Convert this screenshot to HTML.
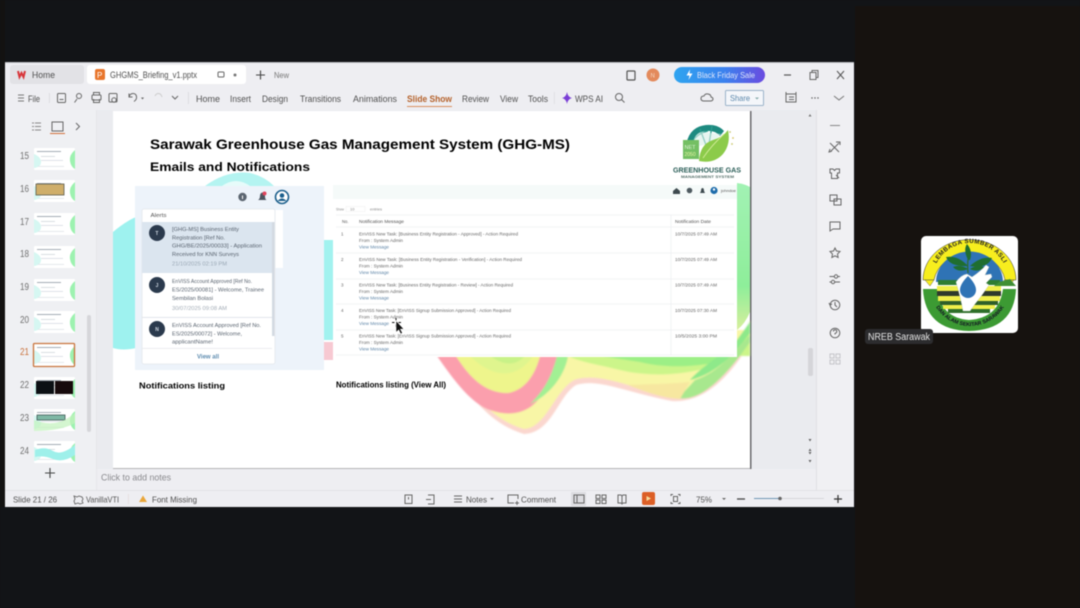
<!DOCTYPE html>
<html lang="en"><head><meta charset="utf-8"><title>GHGMS Briefing</title>
<style>
html,body{margin:0;padding:0;background:#121417;width:1080px;height:608px;overflow:hidden}
svg{display:block;filter:blur(.42px)}
text{font-family:"Liberation Sans",sans-serif;fill:#444}
.m{font-size:9px;fill:#505050}
.n{font-size:10px;fill:#707070}
.b{font-weight:bold;fill:#000}
.a{font-size:5.6px;fill:#5a6470}
.t{font-size:4.5px;fill:#666}
.l{font-size:4.5px;fill:#5f86a8}
.i{fill:none;stroke:#666;stroke-width:1}
</style></head><body>
<svg width="1080" height="608" viewBox="0 0 1080 608" xmlns="http://www.w3.org/2000/svg">
<rect width="1080" height="608" fill="#121417"/>
<rect x="855" y="6" width="225" height="602" fill="#16120f"/>
<rect x="0" y="0" width="5" height="608" fill="#14110e" opacity=".6"/>
<rect x="0" y="507" width="854" height="101" fill="#121417"/>

<!-- window -->
<rect x="5" y="62" width="849" height="445" fill="#eeeef2"/>
<rect x="5" y="62" width="849" height="1" fill="#bcbcc0"/>
<rect x="5" y="110" width="91" height="381" fill="#eff0f3"/>
<rect x="96" y="110" width="1" height="381" fill="#e6e6ea"/>
<rect x="97" y="110" width="720" height="359" fill="#eaebef"/>
<rect x="817" y="110" width="37" height="381" fill="#f0f0f3"/>
<rect x="816" y="110" width="1" height="381" fill="#e0e0e4"/>
<rect x="5" y="490" width="849" height="1" fill="#e2e2e6"/>

<!-- tabs -->
<rect x="10" y="65" width="74" height="19" rx="3" fill="#e2e2e6"/>
<path d="M18 71l1.500 6 2-4 2 4 1.500-6" fill="none" stroke="#d8363a" stroke-width="2"/>
<text x="32" y="78" class="m" textLength="23" lengthAdjust="spacingAndGlyphs">Home</text>
<rect x="87" y="65" width="159" height="19" rx="3" fill="#fff"/>
<rect x="95" y="69" width="10" height="11" rx="2" fill="#e8762c"/>
<text x="97" y="78" style="font-size:8px;fill:#fff">P</text>
<text x="110" y="78" class="m" textLength="87" lengthAdjust="spacingAndGlyphs">GHGMS_Briefing_v1.pptx</text>
<rect x="218" y="72" width="6" height="5" rx="1" class="i"/>
<circle cx="235" cy="75" r="1.500" fill="#777"/>
<path d="M256 75h9M260.500 70.500v9" stroke="#444" stroke-width="1.100"/>
<text x="274" y="78" class="m" style="font-size:8px;fill:#777" textLength="15" lengthAdjust="spacingAndGlyphs">New</text>
<rect x="627" y="71" width="8" height="9" rx="1" fill="none" stroke="#555" stroke-width="1.200"/>
<circle cx="653" cy="75" r="6.500" fill="#e38a5c"/>
<text x="650.500" y="77.500" style="font-size:6px;fill:#f5d6c2">N</text>
<defs>
<linearGradient id="sale" x1="0" x2="1" y1="0" y2="0"><stop offset="0" stop-color="#2fa4f0"/><stop offset=".55" stop-color="#3b82ee"/><stop offset="1" stop-color="#6a4be0"/></linearGradient>
<linearGradient id="gr" x1="0" x2="0" y1="0" y2="1"><stop offset="0" stop-color="#a2f2b4"/><stop offset=".7" stop-color="#8eee9a"/><stop offset="1" stop-color="#d7ef9c"/></linearGradient>
<filter id="soft" x="-5%" y="-5%" width="110%" height="110%"><feGaussianBlur stdDeviation=".9"/></filter>
<path id="arcTop" d="M11 45A38 38 0 0 1 87 45"/>
<path id="arcBot" d="M9 50A40 40 0 0 0 89 50"/>
<g id="thumb"><rect width="41" height="22" rx="1" fill="#fff"/><rect x="3" y="3" width="24" height="1" fill="#a5adb5"/><path d="M0 6q7 3 7 8t-7 6z" fill="#d6f7f2"/><path d="M41 2q-6 5-5 11t5 8z" fill="#9df2b0"/><rect x="7" y="8" width="14" height=".8" fill="#d0d6dc"/><rect x="7" y="12" width="22" height=".8" fill="#d8dde2"/><rect x="4" y="18" width="26" height=".8" fill="#dfe3e8"/></g>
</defs>
<rect x="674" y="67" width="91" height="16" rx="8" fill="url(#sale)"/>
<path d="M690 69.500l-3.500 6h3l-1 4.500 4-6.500h-3z" fill="#fff"/>
<text x="697" y="78" style="font-size:8.500px;fill:#dfe6fb" textLength="58" lengthAdjust="spacingAndGlyphs">Black Friday Sale</text>
<path d="M784 75h7" stroke="#555" stroke-width="1.200"/>
<path d="M810 72.500h6v7h-6zM812 72.500v-2h6v7h-2" class="i"/>
<path d="M837 71l7 8M844 71l-7 8" stroke="#555" stroke-width="1"/>

<!-- ribbon -->
<path d="M18 95h6M18 98h6M18 101h6" stroke="#777" stroke-width=".9"/>
<text x="28" y="102" class="m" textLength="12" lengthAdjust="spacingAndGlyphs">File</text>
<rect x="49" y="93" width=".8" height="10" fill="#d8d8dc"/>
<rect x="57.500" y="93.500" width="8" height="9" rx="1" class="i"/><path d="M59.500 99.500h4" class="i"/>
<circle cx="79" cy="96" r="2.500" class="i"/><path d="M77 99l-2.500 3.500" class="i"/>
<rect x="92" y="95" width="9" height="5" rx="1" class="i"/><path d="M93.500 95v-2.500h6V95M93.500 99v3.500h6V99" class="i"/>
<rect x="109" y="93.500" width="8" height="8.500" rx="1" class="i"/><circle cx="114" cy="100" r="2.200" class="i"/>
<path d="M129 97q1-3.500 4-3.500t3.500 3-2.500 5M129 93.500V97h3.500" class="i"/>
<path d="M141 97.500h3l-1.500 2z" fill="#666"/>
<path d="M162 97q-1-3.500-3.500-3.500T155 96" stroke="#ccc" fill="none"/>
<path d="M172 96l3 3 3-3" class="i"/>
<rect x="188" y="92" width=".8" height="12" fill="#d8d8dc"/>
<text x="196" y="102" class="m" textLength="24" lengthAdjust="spacingAndGlyphs">Home</text>
<text x="230" y="102" class="m" textLength="21" lengthAdjust="spacingAndGlyphs">Insert</text>
<text x="262" y="102" class="m" textLength="26" lengthAdjust="spacingAndGlyphs">Design</text>
<text x="300" y="102" class="m" textLength="41" lengthAdjust="spacingAndGlyphs">Transitions</text>
<text x="353" y="102" class="m" textLength="44" lengthAdjust="spacingAndGlyphs">Animations</text>
<text x="407" y="102" class="m" style="font-weight:bold;fill:#b5622c" textLength="45" lengthAdjust="spacingAndGlyphs">Slide Show</text>
<rect x="407" y="106" width="45" height="1" fill="#d9905e"/>
<text x="462" y="102" class="m" textLength="27" lengthAdjust="spacingAndGlyphs">Review</text>
<text x="500" y="102" class="m" textLength="18" lengthAdjust="spacingAndGlyphs">View</text>
<text x="528" y="102" class="m" textLength="20" lengthAdjust="spacingAndGlyphs">Tools</text>
<rect x="554" y="92" width=".8" height="12" fill="#dcdce0"/>
<path d="M567 92q.8 5 5 6q-4.200 1-5 6q-.8-5-5-6q4.200-1 5-6z" fill="#7a3ed6"/>
<text x="575" y="102" class="m" textLength="28" lengthAdjust="spacingAndGlyphs">WPS AI</text>
<circle cx="619" cy="97" r="3.500" class="i"/><path d="M621.500 99.500l3 3" class="i"/>
<path d="M704 101q-3 0-3-2.500t3-2.500q1-2.500 4-2t3 3q2 .5 2 2t-2 2z" class="i"/>
<rect x="725.500" y="90.500" width="38" height="15" rx="1" fill="#f4f6fa" stroke="#9bb3c9"/>
<text x="730" y="101" style="font-size:8.500px;fill:#5b87ab" textLength="20" lengthAdjust="spacingAndGlyphs">Share</text>
<path d="M755 97.500h4l-2 2z" fill="#8aa"/>
<path d="M786 94h10v8h-10zM786 94v-2M796 94v-2M789 97h5M789 99.500h5" class="i"/>
<circle cx="812" cy="98" r=".7" fill="#555"/><circle cx="815" cy="98" r=".7" fill="#555"/><circle cx="818" cy="98" r=".7" fill="#555"/>
<path d="M834 96l5 4 5-4" stroke="#777" fill="none"/>

<!-- left panel -->
<path d="M32 123h9M32 126.500h9M32 130h9" stroke="#888" stroke-width=".9" stroke-dasharray="2 1 6"/>
<rect x="52" y="122" width="11" height="9" fill="none" stroke="#666"/>
<rect x="50" y="133" width="15" height="1" fill="#d2703a"/>
<path d="M76 123l3.500 3.500-3.500 3.500" class="i"/>

<text x="20" y="159" class="n" textLength="9" lengthAdjust="spacingAndGlyphs">15</text><use href="#thumb" x="34" y="148"/>
<text x="20" y="192" class="n" textLength="9" lengthAdjust="spacingAndGlyphs">16</text><use href="#thumb" x="34" y="180"/><rect x="36" y="184" width="28" height="11" fill="#cfae6a" stroke="#5b5b4c" stroke-width=".8"/>
<text x="20" y="225" class="n" textLength="9" lengthAdjust="spacingAndGlyphs">17</text><use href="#thumb" x="34" y="213"/>
<text x="20" y="257" class="n" textLength="9" lengthAdjust="spacingAndGlyphs">18</text><use href="#thumb" x="34" y="246"/>
<text x="20" y="290" class="n" textLength="9" lengthAdjust="spacingAndGlyphs">19</text><use href="#thumb" x="34" y="279"/>
<text x="20" y="323" class="n" textLength="9" lengthAdjust="spacingAndGlyphs">20</text><use href="#thumb" x="34" y="311"/>
<text x="20" y="355" class="n" style="fill:#c9703a" textLength="9" lengthAdjust="spacingAndGlyphs">21</text><use href="#thumb" x="34" y="344"/>
<rect x="33.500" y="343.500" width="41" height="23" rx="1" fill="none" stroke="#c9753d" stroke-width="1.300"/>
<text x="20" y="388" class="n" textLength="9" lengthAdjust="spacingAndGlyphs">22</text><use href="#thumb" x="34" y="377"/><rect x="36" y="381" width="18" height="13" fill="#0c1014"/><rect x="55" y="381" width="18" height="13" fill="#170a0c"/>
<text x="20" y="421" class="n" textLength="9" lengthAdjust="spacingAndGlyphs">23</text><use href="#thumb" x="34" y="409"/><rect x="37" y="415" width="28" height="5" fill="#7fb8a4" stroke="#3d5a55" stroke-width=".8"/><path d="M34 420q10 4 20 3t21-10v10q-14 8-41 8z" fill="#c2f2bc" opacity=".7"/>
<text x="20" y="454" class="n" textLength="9" lengthAdjust="spacingAndGlyphs">24</text><use href="#thumb" x="34" y="441"/><path d="M35 450q10-4 18 1t22-6v10q-12 8-22 4t-18-2z" fill="#9ef0ea"/>
<rect x="87" y="315" width="4" height="117" rx="2" fill="#d6d6da"/>
<path d="M45 473h10M50 468v10" stroke="#444" stroke-width="1.100"/>

<!-- slide -->
<rect x="113" y="111" width="638.500" height="358" fill="#b5b5b8"/>
<rect x="750" y="111" width="1.500" height="358" fill="#6a6a6d"/>
<rect x="113" y="111" width="637" height="357" fill="#fff"/>

<!-- slide bg -->
<path d="M113 232C120 226 127 221 136 217L136 348C127 350 120 350 113 348Z" style="fill:#9ef2ef"/>
<path d="M205 186q22-16 45-13 14 3 24 13z" fill="#b4f4f1"/>
<path d="M222 186q14-10 28 0z" fill="#e6fbfa"/>
<path d="M324 240h9v100h-9z" fill="#a2f2ef"/>
<path d="M324 342h9v18h-9z" fill="#f7c9d2"/>
<path d="M737 183q8 1 13 4v125q-5 12-13 18z" fill="url(#gr)"/>

<!-- rainbow -->
<g filter="url(#soft)">
<path d="M436 350C462 378 478 420 524 434C552 433 558 396 576 385C598 378 625 392 672 401C702 403 728 380 750 343V330H600z" fill="#fbd7cf"/>
<path d="M438 350C464 376 482 417 524 429C546 428 554 392 574 380C598 372 628 386 672 398C700 400 725 378 750 340V330H600z" fill="#f8f6a6"/>
<path d="M437 356C455 382 472 404 490 410C512 418 532 412 542 394C550 380 554 368 558 356H540C535 375 525 390 508 393C485 393 470 378 456 356z" fill="#fb9fad"/>
<path d="M456 356C470 378 485 393 508 393C525 390 535 375 540 356z" fill="#eef58c"/>
<path d="M470 356C490 376 515 382 533 356z" fill="#dff58e"/>
<path d="M490 356C505 366 515 366 525 356z" fill="#c8f288"/>
<path d="M557 356H568C565 375 550 395 530 404C545 390 552 375 557 356z" fill="#a2f094"/>
<path d="M568 356H750V320L737 356C710 372 660 380 620 370C600 365 580 362 568 356z" fill="#ccf58a"/>
<path d="M600 356H737C715 366 670 370 640 362z" fill="#9cef86"/>
<path d="M678 398C700 402 725 378 750 342V335C735 350 720 372 695 380C688 388 682 394 678 398z" fill="#a8e88e"/>
<path d="M690 380C712 375 730 360 750 333V322L737 340C722 355 700 368 690 380z" fill="#8ee98a"/>
<path d="M628 385C650 394 665 398 680 399L690 382C670 384 650 384 628 385z" fill="#f7e7a0"/>
</g>

<!-- title -->
<text x="150" y="149" class="b" style="font-size:13.500px" textLength="420" lengthAdjust="spacingAndGlyphs">Sarawak Greenhouse Gas Management System (GHG-MS)</text>
<text x="150" y="171" class="b" style="font-size:12px" textLength="160" lengthAdjust="spacingAndGlyphs">Emails and Notifications</text>

<!-- GHG logo -->
<path d="M686 147q2-20 20-22q12-1 18 6l-4 5q-5-6-14-5q-12 1-14 16z" fill="#1d8a80"/>
<path d="M692 142q6-9 16-11M700 129l6 16M712 126l-3 18" stroke="#2d9d90" stroke-width="1.300" fill="none"/>
<path d="M694 147q-2-12 7-15l20 2-8 9z" fill="#d8efe8" opacity=".6"/>
<rect x="683" y="140" width="16" height="19" fill="#74bf63"/>
<text x="684.500" y="149" style="font-size:5.500px;fill:#dff3d8">NET</text>
<text x="684.500" y="156" style="font-size:5px;fill:#eef8a8">2050</text>
<path d="M699 161q1-17 14-21 10-3 15-10 3 14-5 24-9 10-24 7z" fill="#8ccb4a"/>
<path d="M703 158q8-12 21-24" stroke="#d3ec9a" stroke-width=".9" fill="none"/>
<circle cx="730" cy="132" r=".9" fill="#c9c76a"/><circle cx="733" cy="138" r=".9" fill="#d5c55f"/><circle cx="732" cy="144" r=".9" fill="#c9c76a"/>
<text x="673" y="172.500" style="font-size:7px;font-weight:bold;fill:#2b5e58" textLength="68" lengthAdjust="spacingAndGlyphs">GREENHOUSE GAS</text>
<text x="681" y="178" style="font-size:4px;font-weight:bold;fill:#55706a" textLength="53" lengthAdjust="spacingAndGlyphs">MANAGEMENT SYSTEM</text>

<!-- left alerts panel -->
<rect x="135" y="186" width="189" height="184" fill="#edf3fa"/>
<rect x="275" y="210" width="8" height="58" fill="#fff"/>
<circle cx="242.500" cy="197" r="4.200" fill="#5b6570"/><rect x="242" y="195.500" width="1" height="3.500" fill="#fff"/>
<path d="M258 200q2-1 2-4t2.500-3.500 2.500 3.500 2 4z" fill="#4c5560"/>
<circle cx="264.500" cy="193.500" r="2" fill="#e0445c"/>
<circle cx="282" cy="197" r="6.500" fill="#fff" stroke="#1c5f8c" stroke-width="1.600"/>
<circle cx="282" cy="195.500" r="2.300" fill="#1c5f8c"/><path d="M277.500 201q4.500-5 9 0" fill="#1c5f8c"/>
<rect x="142" y="209" width="133" height="155" rx="2" fill="#fff" stroke="#e3e7ec" stroke-width=".8"/>
<text x="150.500" y="217" style="font-size:5.800px;fill:#555" textLength="16" lengthAdjust="spacingAndGlyphs">Alerts</text>
<rect x="142" y="222" width="130" height="51" fill="#dbe5ef"/>
<circle cx="157" cy="233" r="8" fill="#2b3a4d"/><text x="155.400" y="235" style="font-size:5px;font-weight:bold;fill:#cfd8e2">T</text>
<text x="172" y="231" class="a" textLength="67" lengthAdjust="spacingAndGlyphs">[GHG-MS] Business Entity</text>
<text x="172" y="239.500" class="a" textLength="53" lengthAdjust="spacingAndGlyphs">Registration [Ref No.</text>
<text x="172" y="247.500" class="a" textLength="90" lengthAdjust="spacingAndGlyphs">GHG/BE/2025/00033] - Application</text>
<text x="172" y="256" class="a" textLength="67" lengthAdjust="spacingAndGlyphs">Received for KNN Surveys</text>
<text x="172" y="265.500" class="a" style="fill:#9aa8b5" textLength="55" lengthAdjust="spacingAndGlyphs">21/10/2025 02:19 PM</text>
<circle cx="157" cy="285" r="8" fill="#2b3a4d"/><text x="155.600" y="287" style="font-size:5px;font-weight:bold;fill:#cfd8e2">J</text>
<text x="172" y="283" class="a" textLength="80" lengthAdjust="spacingAndGlyphs">EnVISS Account Approved [Ref No.</text>
<text x="172" y="291.500" class="a" textLength="92" lengthAdjust="spacingAndGlyphs">ES/2025/00081] - Welcome, Trainee</text>
<text x="172" y="300" class="a" textLength="41" lengthAdjust="spacingAndGlyphs">Sembilan Bolasi</text>
<text x="172" y="310" class="a" style="fill:#a5aeb8" textLength="55" lengthAdjust="spacingAndGlyphs">30/07/2025 09:08 AM</text>
<rect x="142" y="317" width="130" height=".8" fill="#dde1e6"/>
<circle cx="157" cy="329" r="8" fill="#2b3a4d"/><text x="155.200" y="331" style="font-size:5px;font-weight:bold;fill:#cfd8e2">N</text>
<text x="172" y="327" class="a" textLength="89" lengthAdjust="spacingAndGlyphs">EnVISS Account Approved [Ref No.</text>
<text x="172" y="335.500" class="a" textLength="70" lengthAdjust="spacingAndGlyphs">ES/2025/00072] - Welcome,</text>
<text x="172" y="343.500" class="a" textLength="41" lengthAdjust="spacingAndGlyphs">applicantName!</text>
<rect x="142" y="348" width="130" height=".8" fill="#e6e9ed"/>
<text x="197" y="358.500" style="font-size:6.500px;font-weight:bold;fill:#5f8db0" textLength="22" lengthAdjust="spacingAndGlyphs">View all</text>
<rect x="272" y="222" width="2.500" height="114" fill="#d3dae2"/>
<text x="139" y="388.500" class="b" style="font-size:8.500px" textLength="86" lengthAdjust="spacingAndGlyphs">Notifications listing</text>

<!-- right table -->
<rect x="333" y="185" width="404" height="172" fill="#fff"/>
<rect x="333" y="185" width="404" height="14" fill="#f5faf9"/>
<path d="M673 191l3.500-3 3.500 3v3h-7z" fill="#3e4a4f"/>
<circle cx="689.500" cy="190.500" r="2.800" fill="#4e5a60"/>
<path d="M700 193l1-2q0-3 1.500-3t1.500 3l1 2z" fill="#3e4a4f"/>
<circle cx="714" cy="190.500" r="3.600" fill="#1e6cab"/><circle cx="714" cy="189.500" r="1.200" fill="#fff"/>
<text x="721" y="192" style="font-size:4px;fill:#555" textLength="15" lengthAdjust="spacingAndGlyphs">johndoe</text>
<text x="336" y="210.500" style="font-size:4px;fill:#888" textLength="8" lengthAdjust="spacingAndGlyphs">Show</text>
<rect x="346" y="206.500" width="19" height="5" fill="#fff" stroke="#eee" stroke-width=".5"/>
<text x="350" y="210.500" style="font-size:4px;fill:#888">10</text>
<text x="370" y="210.500" style="font-size:4px;fill:#888" textLength="12" lengthAdjust="spacingAndGlyphs">entries</text>
<path d="M336 215h398M336 227h398M336 253h398M336 279h398M336 304h398M336 330h398M336 355h398" stroke="#eef0f2" stroke-width=".7"/>
<path d="M671 215v140" stroke="#eceef0" stroke-width=".7"/>
<text x="342" y="223" style="font-size:4.800px;fill:#555" textLength="6.500" lengthAdjust="spacingAndGlyphs">No.</text>
<text x="359" y="223" style="font-size:4.800px;fill:#555" textLength="45" lengthAdjust="spacingAndGlyphs">Notification Message</text>
<text x="675" y="223" style="font-size:4.800px;fill:#555" textLength="36" lengthAdjust="spacingAndGlyphs">Notification Date</text>

<text x="341" y="235.500" class="t">1</text>
<text x="359" y="235.500" class="t" textLength="159" lengthAdjust="spacingAndGlyphs">EnVISS New Task: [Business Entity Registration - Approved] - Action Required</text>
<text x="359" y="242" class="t" textLength="44" lengthAdjust="spacingAndGlyphs">From : System Admin</text>
<text x="359" y="248.500" class="l" textLength="30" lengthAdjust="spacingAndGlyphs">View Message</text>
<text x="675" y="235.500" class="t" textLength="42" lengthAdjust="spacingAndGlyphs">10/7/2025 07:49 AM</text>

<text x="341" y="261" class="t">2</text>
<text x="359" y="261" class="t" textLength="163" lengthAdjust="spacingAndGlyphs">EnVISS New Task: [Business Entity Registration - Verification] - Action Required</text>
<text x="359" y="267.500" class="t" textLength="44" lengthAdjust="spacingAndGlyphs">From : System Admin</text>
<text x="359" y="274" class="l" textLength="30" lengthAdjust="spacingAndGlyphs">View Message</text>
<text x="675" y="261" class="t" textLength="42" lengthAdjust="spacingAndGlyphs">10/7/2025 07:49 AM</text>

<text x="341" y="286.500" class="t">3</text>
<text x="359" y="286.500" class="t" textLength="154" lengthAdjust="spacingAndGlyphs">EnVISS New Task: [Business Entity Registration - Review] - Action Required</text>
<text x="359" y="293" class="t" textLength="44" lengthAdjust="spacingAndGlyphs">From : System Admin</text>
<text x="359" y="299.500" class="l" textLength="30" lengthAdjust="spacingAndGlyphs">View Message</text>
<text x="675" y="286.500" class="t" textLength="42" lengthAdjust="spacingAndGlyphs">10/7/2025 07:49 AM</text>

<text x="341" y="312" class="t">4</text>
<text x="359" y="312" class="t" textLength="152" lengthAdjust="spacingAndGlyphs">EnVISS New Task: [EnVISS Signup Submission Approved] - Action Required</text>
<text x="359" y="318.500" class="t" textLength="44" lengthAdjust="spacingAndGlyphs">From : System Admin</text>
<text x="359" y="325" class="l" textLength="30" lengthAdjust="spacingAndGlyphs">View Message</text>
<text x="675" y="312" class="t" textLength="42" lengthAdjust="spacingAndGlyphs">10/7/2025 07:30 AM</text>

<text x="341" y="337.500" class="t">5</text>
<text x="359" y="337.500" class="t" textLength="152" lengthAdjust="spacingAndGlyphs">EnVISS New Task: [EnVISS Signup Submission Approved] - Action Required</text>
<text x="359" y="344" class="t" textLength="44" lengthAdjust="spacingAndGlyphs">From : System Admin</text>
<text x="359" y="350.500" class="l" textLength="30" lengthAdjust="spacingAndGlyphs">View Message</text>
<text x="675" y="337.500" class="t" textLength="42" lengthAdjust="spacingAndGlyphs">10/5/2025 3:00 PM</text>

<!-- cursor -->
<path d="M396 318v9M392 322.500h9" stroke="#111" stroke-width="1" stroke-dasharray="2.500 4"/>
<path d="M396 320.500v12l2.700-2.500 2 4 1.800-1-2-3.800h3.500z" fill="#111" stroke="#fff" stroke-width=".6"/>
<text x="336" y="387.500" class="b" style="font-size:8.500px" textLength="110" lengthAdjust="spacingAndGlyphs">Notifications listing (View All)</text>

<!-- scroll -->
<path d="M808.500 116.500l1.500-2.500 1.500 2.500z" fill="#777"/>
<rect x="808" y="348" width="5" height="28" rx="2" fill="#d5d5d9"/>
<path d="M808.500 439l1.500 2.500 1.500-2.500zM808.500 451l1.500-2.500 1.500 2.500zM808.500 452l1.500 2.500 1.500-2.500zM808.500 460l1.500 2.500 1.500-2.500z" fill="#666"/>

<!-- right icons -->
<g fill="none" stroke="#666" stroke-width="1">
<path d="M830 125.500h10" stroke="#888"/>
<path d="M830 143l9 9M839 143l-9 9M836 142l4 0v3M830 149l-1 3 3-1"/>
<path d="M830 169h3l1.500 1.500 1.500-1.500h3.500v4h-2v5.500h-6V173h-1.500zM836 175l3 3"/>
<path d="M830 195h7v6h-7zM834 199h7v6h-7z"/>
<path d="M830 222h10v7h-7l-3 2z"/>
<path d="M835 248l1.500 3 3.500.5-2.500 2.500.6 3.500-3.100-1.700-3.100 1.700.6-3.500-2.500-2.500 3.500-.5z"/>
<path d="M829.500 276.500h5M838 276.500h2M829.500 282h2M835 282h5"/><circle cx="836" cy="276.500" r="1.700"/><circle cx="833" cy="282" r="1.700"/>
<circle cx="835" cy="305" r="4.800"/><path d="M835 302v3l2 2M829 303l1 2 2-1"/>
<circle cx="835" cy="333" r="4.800"/><path d="M833.300 331.500q.3-1.800 1.900-1.700t1.600 1.600-1.800 2.100v1"/>
</g>
<g fill="none" stroke="#c5c5c9"><rect x="830" y="354" width="4" height="4"/><rect x="836" y="354" width="4" height="4"/><rect x="830" y="360" width="4" height="4"/><rect x="836" y="360" width="4" height="4"/></g>

<!-- notes -->
<text x="101" y="480.500" style="font-size:9.500px;fill:#8a8a8e" textLength="70" lengthAdjust="spacingAndGlyphs">Click to add notes</text>

<!-- status -->
<text x="13" y="502.500" class="m" style="font-size:8.500px" textLength="44" lengthAdjust="spacingAndGlyphs">Slide 21 / 26</text>
<path d="M74 496l3 1 2-1 3 1 1 2-1 2 1 2-3 1-2-1-3 1-1-3 1-2z" fill="none" stroke="#555" stroke-width=".8"/>
<text x="86" y="502.500" class="m" style="font-size:8.500px" textLength="33" lengthAdjust="spacingAndGlyphs">VanillaVTI</text>
<rect x="128" y="494" width=".8" height="10" fill="#e6dcdc"/>
<path d="M143 495.500l4 6.500h-8z" fill="#e9a63a"/>
<text x="152" y="502.500" class="m" style="font-size:8.500px" textLength="45" lengthAdjust="spacingAndGlyphs">Font Missing</text>
<rect x="405" y="495" width="7" height="8.500" class="i"/><path d="M408.500 497v2.500" class="i"/>
<path d="M428 495h6v9h-6M426 499.500h5" class="i"/>
<path d="M454 496h8M454 499h8M454 502h8" stroke="#666" stroke-width=".9"/>
<text x="466" y="502.500" class="m" style="font-size:8.500px" textLength="21" lengthAdjust="spacingAndGlyphs">Notes</text>
<path d="M490 498h4l-2 2z" fill="#666"/>
<path d="M514 503h-6v-8h10v4M515 503h4M517 501v4" class="i"/>
<text x="521" y="502.500" class="m" style="font-size:8.500px" textLength="35" lengthAdjust="spacingAndGlyphs">Comment</text>
<rect x="571" y="492" width="15" height="14" rx="1" fill="#dcdce0"/>
<rect x="574" y="495" width="10" height="8" class="i"/><path d="M577 495v8" class="i"/>
<path d="M596 495h4v3.500h-4zM602 495h4v3.500h-4zM596 500h4v3.500h-4zM602 500h4v3.500h-4z" class="i"/>
<path d="M618 495h3l1 1 1-1h3v8h-3l-1 1-1-1h-3zM622 496v7" class="i"/>
<rect x="642" y="492" width="13" height="13" rx="2" fill="#dc5f26"/>
<path d="M646.500 496l4.500 2.500-4.500 2.500z" fill="#f7dd9c"/>
<path d="M671 496v-1.500h2M678 494.500h2v1.500M680 502v1.500h-2M673 503.500h-2V502" class="i"/><rect x="673.500" y="496.500" width="4" height="5" class="i"/>
<text x="696" y="502.500" class="m" style="font-size:8.500px" textLength="16" lengthAdjust="spacingAndGlyphs">75%</text>
<path d="M722 498h4l-2 2z" fill="#666"/>
<path d="M737 499h8" stroke="#444" stroke-width="1.300"/>
<rect x="754" y="498" width="70" height=".8" fill="#d2d2d6"/>
<rect x="754" y="498" width="25" height="1" fill="#6f96b5"/>
<circle cx="780" cy="498.500" r="1.800" fill="#666"/>
<path d="M834 499h8M838 495v8" stroke="#333" stroke-width="1.200"/>

<!-- participant logo -->
<g transform="translate(921 236)">
<rect width="97" height="97" rx="5" fill="#fff"/>
<path d="M2 44A46 40 0 0 1 95 44H84A36 32 0 0 0 13 44z" fill="#f7ee1e" stroke="#333" stroke-width=".5"/>
<path d="M15 46A33 30 0 0 1 82 46z" fill="#2f73b5"/>
<path d="M4 44h9l-4 6zM83 44h10l-5 6z" fill="#f7ee1e" stroke="#444" stroke-width=".4"/>
<path d="M2 53H16Q20 82 48 84 78 82 82 53H95Q93 94 48 95 4 94 2 53z" fill="#3c9a33"/>
<path d="M17 44h62v5H17z" fill="#2e7d32"/>
<path d="M16 50h64v5H16z" fill="#f0ef4a"/>
<path d="M16 55h64v5H16z" fill="#2f3a2c"/>
<path d="M17 60h62v5H17z" fill="#f0ef4a"/>
<path d="M19 65h58v4H19z" fill="#2f5f2a"/>
<path d="M22 69h52v4H22z" fill="#f0ef4a"/>
<path d="M27 73h42v4H27z" fill="#2f6f2a"/>
<path d="M78 46l11-3 6 7H73z" fill="#3f8f35"/>
<path d="M35 46q5-7 11-8l5 3q9-6 14-12l3 2-4 8 6-1 1 3-6 6 3 2-7 10-7 9-5 7H42q-2-12-7-29z" fill="#fff" stroke="#bfc9bf" stroke-width=".4"/>
<path d="M47 40q8 8 8 14a8 8 0 0 1-16 0q0-6 8-14z" fill="#2f73b5"/>
<path d="M47 37q-1-12 1-19" stroke="#2e6a30" stroke-width="1.300" fill="none"/>
<path d="M47 30q-10-11-22-9 4 10 22 9zM49 30q11-10 22-8-5 11-22 8zM47 24q-5-10-1-16 6 7 3 16zM47 33q-8-5-15-2 5 6 15 2zM49 33q8-5 14-2-5 6-14 2z" fill="#1f6e30"/>
<text text-anchor="middle" style="font-size:6.200px;font-weight:bold;fill:#222;letter-spacing:.4px"><textPath href="#arcTop" startOffset="50%">LEMBAGA SUMBER ASLI</textPath></text>
<text text-anchor="middle" style="font-size:5.300px;font-weight:bold;fill:#112"><textPath href="#arcBot" startOffset="50%">DAN ALAM SEKITAR SARAWAK</textPath></text>
</g>
<rect x="865" y="329" width="68" height="15" rx="3" fill="#2c2c2e"/>
<text x="868" y="340" style="font-size:10px;fill:#e6e6e6" textLength="62" lengthAdjust="spacingAndGlyphs">NREB Sarawak</text>
</svg>
</body></html>
